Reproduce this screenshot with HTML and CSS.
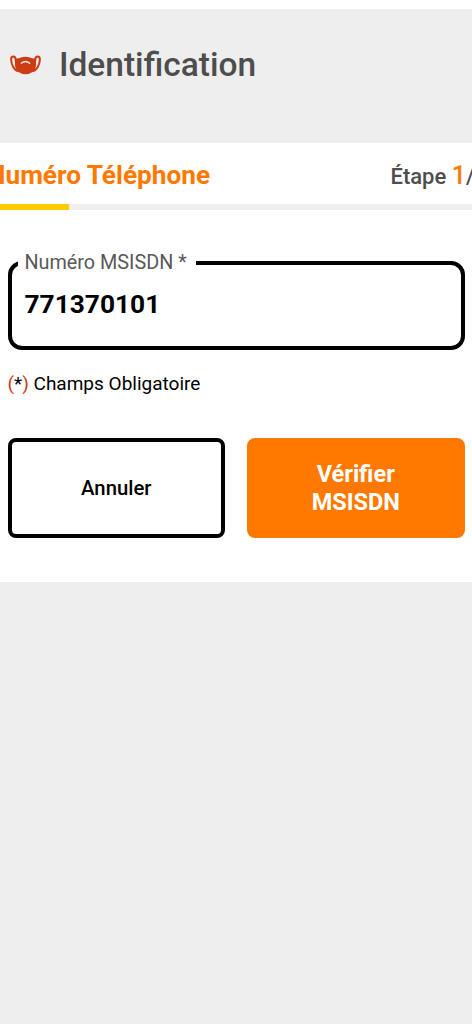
FILE: index.html
```html
<!DOCTYPE html>
<html lang="fr">
<head>
<meta charset="utf-8">
<title>Identification</title>
<link rel="stylesheet" href="styles.css">
</head>
<body>
<main class="page">
  <header class="header">
    <svg class="mask-icon" viewBox="0 0 31 20" aria-hidden="true">
      <path class="strap" d="M8 16.2C4 15.2 1.1 9.5 1.1 4Q1.2 1.5 3.5 1.5Q5.700 1.6 5.7 5L6.4 12M23 16.2C27 15.2 29.9 9.5 29.9 4Q29.8 1.5 27.5 1.5Q25.3 1.6 25.3 5L24.6 12"/>
      <path class="cloth" d="M5.500 3.5Q8.5 3.8 11 2.6Q15.5 1 20 2.6Q22.5 3.8 25.5 3.5Q26 8 25.6 12Q25.3 14.8 23.5 16.5Q19.5 19.2 15.5 19.2Q11.5 19.2 7.5 16.5Q5.7 14.8 5.4 12Q5 8 5.5 3.5Z"/>
      <path class="fold" d="M11.3 8.2Q15.5 4.6 19.7 8.2"/>
    </svg>
    <h1 class="title">Identification</h1>
  </header>
  <section class="card">
    <div class="step">
      <h2 class="step-name">Numéro Téléphone</h2>
      <p class="step-count">Étape <span class="step-current">1</span>/3</p>
    </div>
    <div class="progress"><div class="progress-value"></div></div>
    <form class="form">
      <fieldset class="field">
        <legend class="label">Numéro MSISDN *</legend>
        <div class="value">771370101</div>
      </fieldset>
      <p class="note"><span class="paren">(</span>*<span class="paren">)</span> Champs Obligatoire</p>
      <div class="actions">
        <button type="button" class="button cancel">Annuler</button>
        <button type="button" class="button verify">Vérifier<br>MSISDN</button>
      </div>
    </form>
  </section>
</main>
</body>
</html>
```
FILE: styles.css
```css
* { box-sizing: border-box; }
body {
  margin: 0;
  background: #fff;
  color: #000;
  font-family: Roboto, "Liberation Sans", sans-serif;
}
h1, h2, p { margin: 0; }
.page {
  height: 1024px;
  border-top: 9px solid #fff;
  background: #eee;
  overflow: hidden;
}
.header {
  display: flex;
  height: 134.4px;
  padding: 35.5px 0 0 10px;
  gap: 18px;
}
.mask-icon { width: 31px; height: 20px; margin-top: 10px; }
.strap { fill: none; stroke: #cd3c14; stroke-width: 2; }
.cloth { fill: #cd3c14; }
.fold { fill: none; stroke: #eee; stroke-width: 1.4; stroke-linecap: round; }
.title { color: #4d4d4d; font-size: 33.5px; line-height: 40px; font-weight: 500; }
.card { height: 438.6px; background: #fff; }
.step {
  display: flex;
  justify-content: space-between;
  align-items: baseline;
  height: 60.6px;
  padding-top: 13.2px;
  margin: 0 -15px 0 -13px;
  white-space: nowrap;
}
.step-name { color: #ff7900; font-size: 26.2px; line-height: 36px; font-weight: 700; }
.step-count { color: #4d4d4d; font-size: 22px; line-height: 34px; font-weight: 500; }
.step-current { color: #ff7900; font-size: 25px; }
.progress { height: 6px; background: #eee; }
.progress-value { width: 69px; height: 6px; background: #fc0; }
.form { padding: 41px 7.5px 0; }
.field {
  height: 99px;
  margin: 0;
  padding: 0 13px;
  border: 4.5px solid #000;
  border-radius: 14px;
}
.label { padding: 0 9px 0 7px; margin-left: -7px; color: #595959; font-size: 19.8px; line-height: 24px; }
.value { padding-top: 13px; font-size: 26.3px; line-height: 32px; font-weight: 700; }
.note { margin-top: 22px; font-size: 19px; line-height: 24px; }
.paren { color: #cd3c14; }
.actions { display: grid; grid-template-columns: 1fr 1fr; gap: 22px; margin-top: 42px; }
.button {
  height: 100px;
  padding: 0;
  border: 4.5px solid #000;
  border-radius: 8px;
  background: #fff;
  color: #000;
  font-family: inherit;
  font-size: 20.3px;
  font-weight: 500;
}
.verify { border-color: #ff7900; background: #ff7900; color: #fff; font-size: 23.5px; line-height: 28px; font-weight: 700; }
```
